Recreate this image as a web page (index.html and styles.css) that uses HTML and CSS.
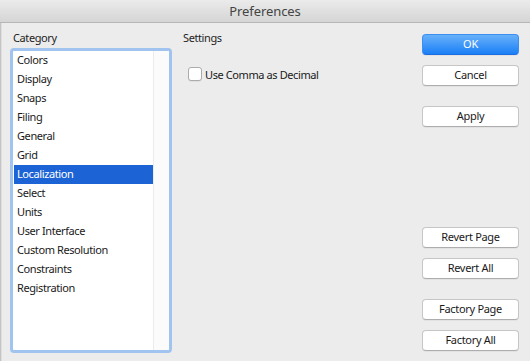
FILE: index.html
```html
<!DOCTYPE html>
<html lang="en">
<head>
  <meta charset="UTF-8" />
  <title>Preferences</title>
  <link rel="stylesheet" href="styles.css">
</head>
<body>
  <div class="window">
    <div class="titlebar">Preferences</div>

    <div class="content">
      <div class="col-category">
        <div class="label">Category</div>
        <div class="listbox">
          <ul class="items">
            <li>Colors</li>
            <li>Display</li>
            <li>Snaps</li>
            <li>Filing</li>
            <li>General</li>
            <li>Grid</li>
            <li class="selected">Localization</li>
            <li>Select</li>
            <li>Units</li>
            <li>User Interface</li>
            <li>Custom Resolution</li>
            <li>Constraints</li>
            <li>Registration</li>
          </ul>
          <div class="track"></div>
        </div>
      </div>

      <div class="col-settings">
        <div class="label">Settings</div>
        <label class="check-row">
          <span class="checkbox"></span>
          <span>Use Comma as Decimal</span>
        </label>
      </div>

      <div class="col-buttons">
        <div class="group">
          <button class="btn primary">OK</button>
          <button class="btn">Cancel</button>
          <button class="btn gap-big">Apply</button>
        </div>
        <div class="group bottom">
          <button class="btn">Revert Page</button>
          <button class="btn">Revert All</button>
          <button class="btn gap-big">Factory Page</button>
          <button class="btn">Factory All</button>
        </div>
      </div>
    </div>
  </div>
</body>
</html>
```

FILE: styles.css
```css
body {
  margin: 0;
  font-family: 'Noto Sans', 'Open Sans', sans-serif;
  font-size: 11px;
  letter-spacing: -0.4px;
  color: #1a1a1a;
  background: #ececec;
}

.window {
  width: 530px;
  height: 361px;
  display: flex;
  flex-direction: column;
  background: #ececec;
  box-shadow: inset 1px 0 0 #c4c4c4, inset 2px 0 0 #dedede;
  overflow: hidden;
}

.titlebar {
  height: 22px;
  line-height: 22px;
  text-align: center;
  font-size: 13px;
  letter-spacing: -0.1px;
  color: #444;
  background: linear-gradient(#ebebeb, #d5d5d5);
  border-bottom: 1px solid #b6b6b6;
}

.content {
  flex: 1;
  display: flex;
  padding: 0 11px 0 10px;
}

.label {
  height: 14px;
  line-height: 14px;
  margin-top: 8px;
  color: #1e1e1e;
}

/* lista de categorias */
.col-category {
  width: 162px;
  display: flex;
  flex-direction: column;
}

.col-category .label {
  padding-left: 3px;
  margin-bottom: 3px;
}

.listbox {
  height: 299px;
  border: 3px solid #a1c3ef;
  border-radius: 4px;
  background: #fff;
  display: flex;
}

.items {
  list-style: none;
  margin: 0;
  padding: 0 0 0 1px;
  width: 139px;
}

.items li {
  height: 19px;
  line-height: 17px;
  padding-left: 3px;
  white-space: nowrap;
}

.items li.selected {
  background: #1c63d5;
  color: #fff;
}

.track {
  flex: 1;
  background: #fbfbfb;
  border-left: 1px solid #ececec;
}

/* ajustes */
.col-settings {
  flex: 1;
  margin-left: 11px;
}

.check-row {
  display: flex;
  align-items: center;
  height: 16px;
  margin-top: 21px;
  padding-left: 5px;
  gap: 3px;
}

.checkbox {
  width: 12px;
  height: 12px;
  background: #fff;
  border: 1px solid #ababab;
  border-radius: 3px;
  box-shadow: 0 1px 0 rgba(0,0,0,0.05);
}

/* botones */
.col-buttons {
  width: 97px;
  display: flex;
  flex-direction: column;
  justify-content: space-between;
  padding: 11px 0 10px;
}

.group {
  display: flex;
  flex-direction: column;
  gap: 10px;
}

.btn {
  height: 21px;
  font-family: inherit;
  font-size: 11px;
  letter-spacing: -0.3px;
  color: #1a1a1a;
  background: #fff;
  border: 1px solid #c6c6c6;
  border-bottom-color: #adadad;
  border-radius: 4px;
  padding: 0 0 2px;
  box-shadow: 0 1px 0 rgba(0,0,0,0.04);
}

.btn.primary {
  color: #fff;
  background: linear-gradient(#68b1fa, #1b7ff6);
  border-color: #3d8ef2;
  border-bottom-color: #1c6ee0;
}

.btn.gap-big {
  margin-top: 10px;
}
```
